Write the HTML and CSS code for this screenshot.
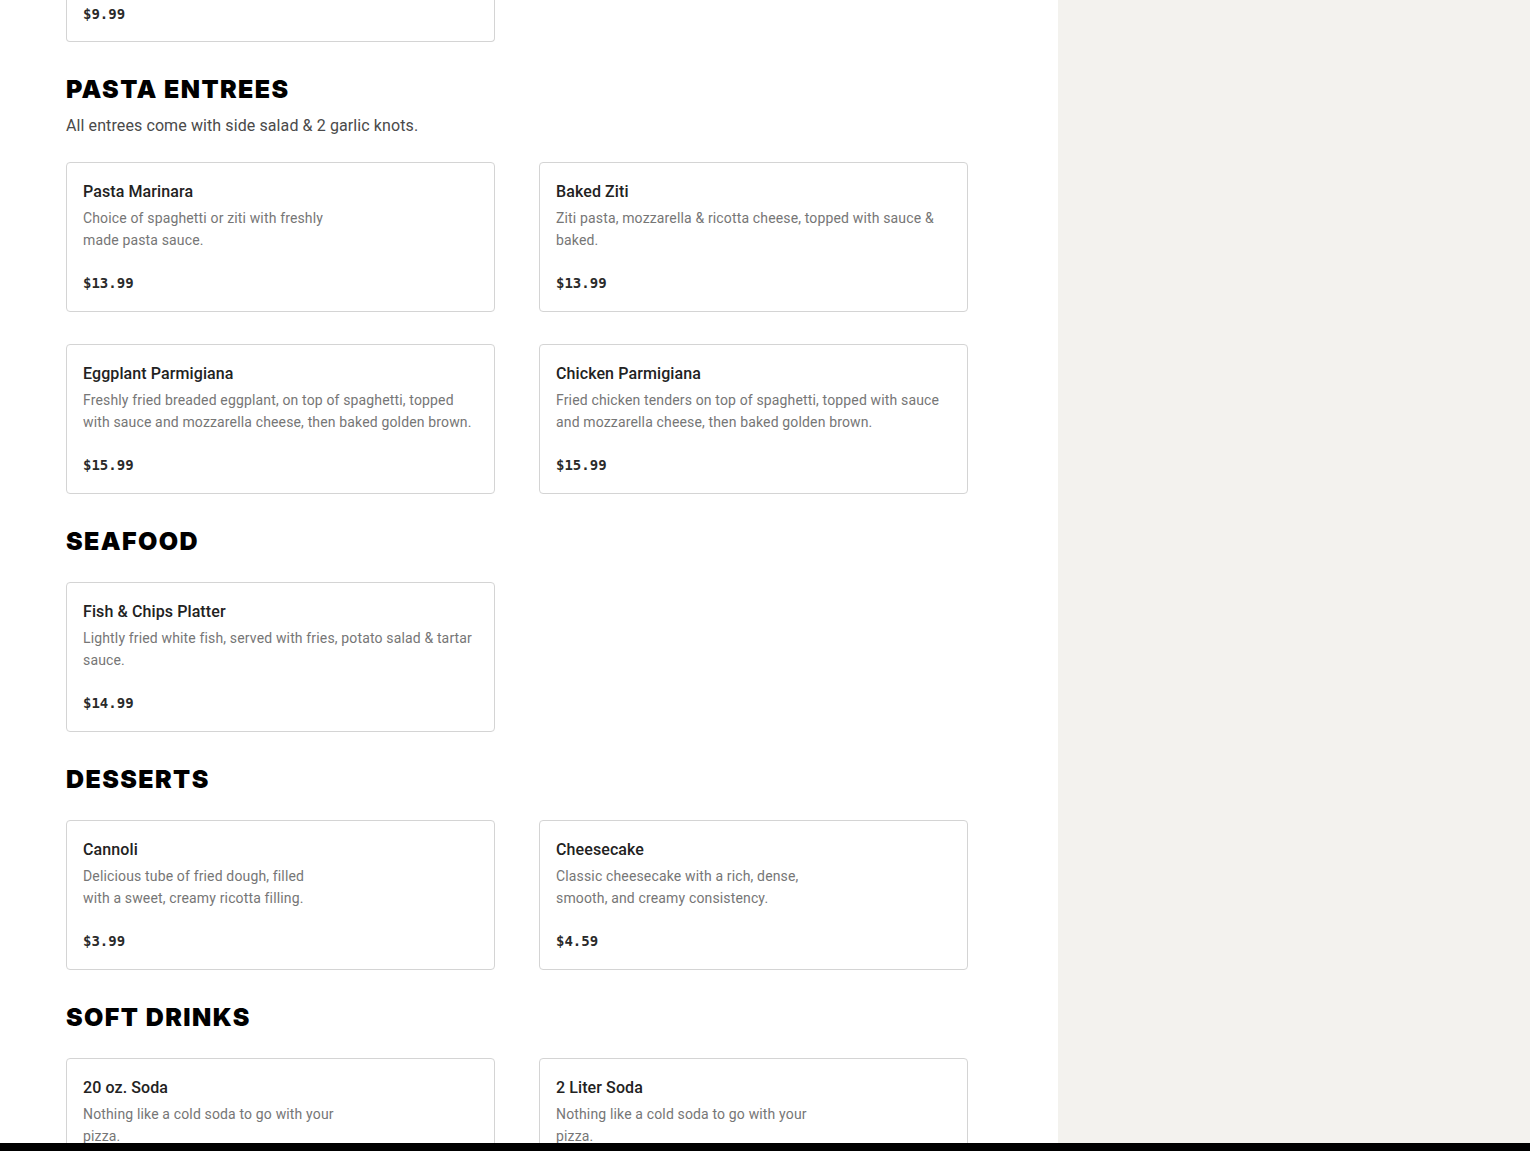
FILE: index.html
```html
<!DOCTYPE html>
<html lang="en">
<head>
  <meta charset="UTF-8" />
  <meta name="viewport" content="width=device-width, initial-scale=1.0"/>
  <title>Menu</title>
  <link rel="stylesheet" href="styles.css">
</head>
<body>

  <div class="page">
    <main class="menu">

      <!-- tail of the previous section -->
      <section class="section">
        <div class="item-grid">
          <div class="item item-cut">
            <div class="price">$9.99</div>
          </div>
        </div>
      </section>

      <section class="section">
        <h2>Pasta Entrees</h2>
        <p class="note">All entrees come with side salad &amp; 2 garlic knots.</p>
        <div class="item-grid">
          <div class="item">
            <h3>Pasta Marinara</h3>
            <p class="desc">Choice of spaghetti or ziti with freshly<br>made pasta sauce.</p>
            <div class="price">$13.99</div>
          </div>
          <div class="item">
            <h3>Baked Ziti</h3>
            <p class="desc">Ziti pasta, mozzarella &amp; ricotta cheese, topped with sauce &amp; baked.</p>
            <div class="price">$13.99</div>
          </div>
          <div class="item">
            <h3>Eggplant Parmigiana</h3>
            <p class="desc">Freshly fried breaded eggplant, on top of spaghetti, topped with sauce and mozzarella cheese, then baked golden brown.</p>
            <div class="price">$15.99</div>
          </div>
          <div class="item">
            <h3>Chicken Parmigiana</h3>
            <p class="desc">Fried chicken tenders on top of spaghetti, topped with sauce and mozzarella cheese, then baked golden brown.</p>
            <div class="price">$15.99</div>
          </div>
        </div>
      </section>

      <section class="section">
        <h2>Seafood</h2>
        <div class="item-grid">
          <div class="item">
            <h3>Fish &amp; Chips Platter</h3>
            <p class="desc">Lightly fried white fish, served with fries, potato salad &amp; tartar sauce.</p>
            <div class="price">$14.99</div>
          </div>
        </div>
      </section>

      <section class="section">
        <h2>Desserts</h2>
        <div class="item-grid">
          <div class="item">
            <h3>Cannoli</h3>
            <p class="desc">Delicious tube of fried dough, filled<br>with a sweet, creamy ricotta filling.</p>
            <div class="price">$3.99</div>
          </div>
          <div class="item">
            <h3>Cheesecake</h3>
            <p class="desc">Classic cheesecake with a rich, dense,<br>smooth, and creamy consistency.</p>
            <div class="price">$4.59</div>
          </div>
        </div>
      </section>

      <section class="section">
        <h2>Soft Drinks</h2>
        <div class="item-grid">
          <div class="item">
            <h3>20 oz. Soda</h3>
            <p class="desc">Nothing like a cold soda to go with your<br>pizza.</p>
            <div class="price">$2.49</div>
          </div>
          <div class="item">
            <h3>2 Liter Soda</h3>
            <p class="desc">Nothing like a cold soda to go with your<br>pizza.</p>
            <div class="price">$3.99</div>
          </div>
        </div>
      </section>

    </main>

    <aside class="side"></aside>
  </div>

  <div class="bottom-bar"></div>

</body>
</html>
```

FILE: styles.css
```css
* {
  box-sizing: border-box;
}

html, body {
  height: 100%;
}

body {
  margin: 0;
  font-family: 'Roboto', 'Liberation Sans', sans-serif;
  color: #222;
  background: #fff;
  display: grid;
  grid-template-rows: 1fr 8px;
  overflow: hidden;
}

.page {
  display: flex;
  min-height: 0;
  overflow: hidden;
}

.menu {
  width: 1058px;
  flex-shrink: 0;
  padding: 0 90px 0 66px;
  background: #fff;
}

.side {
  flex: 1;
  background: #f3f2ee;
}

.bottom-bar {
  background: #000;
}

.section {
  padding-bottom: 30px;
}

h2 {
  font-family: 'Inter', 'Liberation Sans', sans-serif;
  font-weight: 900;
  font-size: 25px;
  line-height: 34px;
  text-transform: uppercase;
  letter-spacing: 1.4px;
  color: #000;
  margin: 0 0 24px;
}

.note {
  font-size: 16px;
  line-height: 24px;
  letter-spacing: 0.1px;
  color: #4a4a4a;
  margin: -16px 0 24px;
}

.item-grid {
  display: grid;
  grid-template-columns: 429px 429px;
  column-gap: 44px;
  row-gap: 32px;
}

.item {
  border: 1px solid #d4d4d4;
  border-radius: 4px;
  padding: 17px 16px 15px;
  height: 150px;
}

.item-cut {
  border-top: none;
  border-radius: 0 0 4px 4px;
  padding-top: 2px;
  padding-bottom: 15px;
  height: auto;
}

.item h3 {
  font-size: 16px;
  font-weight: 500;
  line-height: 24px;
  letter-spacing: 0.1px;
  margin: 0;
  color: #222;
}

.desc {
  font-size: 14px;
  line-height: 22px;
  letter-spacing: 0.15px;
  color: #767676;
  margin: 3px 0 20px;
  height: 44px;
}

.price {
  font-family: 'DejaVu Sans Mono', 'Liberation Mono', monospace;
  font-weight: bold;
  font-size: 14px;
  line-height: 24px;
  color: #2a2a2a;
}
```
